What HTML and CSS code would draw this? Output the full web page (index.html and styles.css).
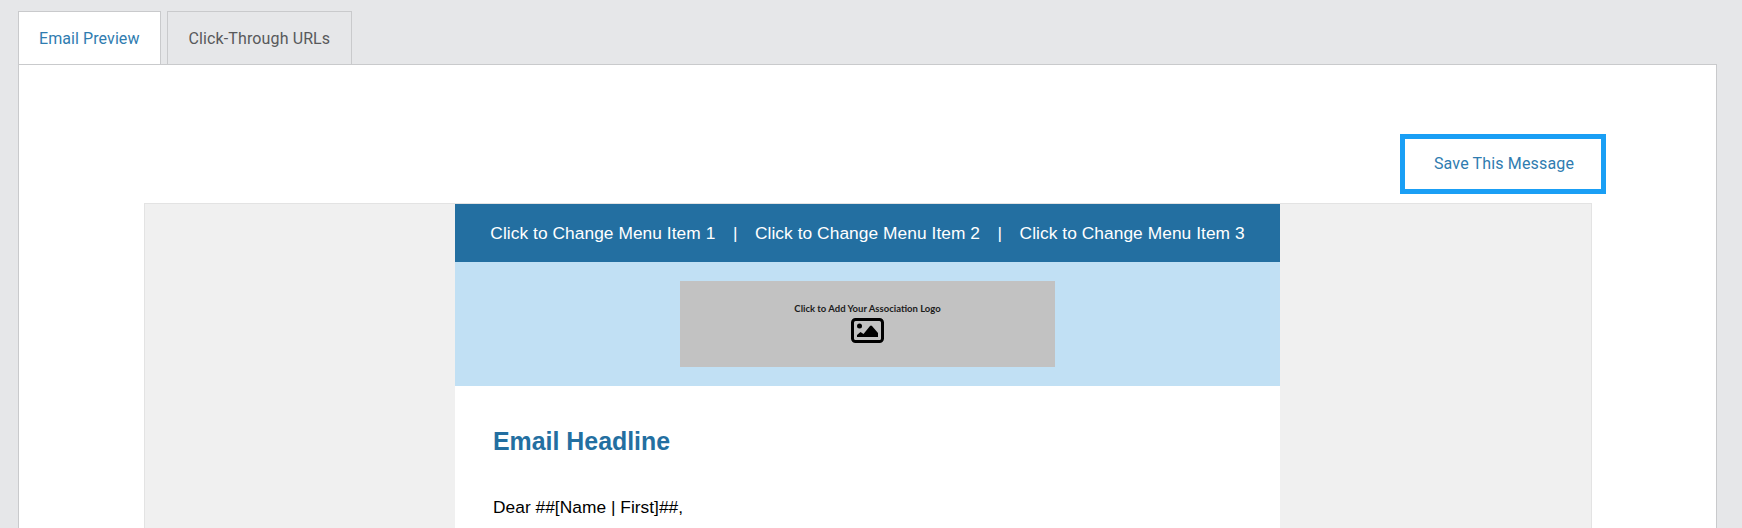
FILE: index.html
```html
<!DOCTYPE html>
<html>
<head>
    <title>Email Preview</title>
    <link rel="stylesheet" href="styles.css">
</head>
<body>
    <div class="tabs">
        <a class="tab active">Email Preview</a>
        <a class="tab">Click-Through URLs</a>
    </div>
    <div class="panel">
        <div class="actions">
            <a class="btn-save">Save This Message</a>
        </div>
        <div class="frame">
            <div class="email">
                <div class="menu">
                    <span>Click to Change Menu Item 1</span>
                    <span class="sep">|</span>
                    <span>Click to Change Menu Item 2</span>
                    <span class="sep">|</span>
                    <span>Click to Change Menu Item 3</span>
                </div>
                <div class="banner">
                    <div class="logo">
                        <p>Click to Add Your Association Logo</p>
                        <svg width="33" height="25" viewBox="0 0 33 25">
                            <rect x="1.500" y="1.500" width="30" height="22" rx="3" fill="none" stroke="#000" stroke-width="3"/>
                            <circle cx="8.500" cy="8" r="2.500" fill="#000"/>
                            <path d="M6 19 L6 17 L9.500 14 L12.500 16 L19 8 Q20 7 21 8 L27 15 L27 19 Z" fill="#000"/>
                        </svg>
                    </div>
                </div>
                <div class="content">
                    <h1>Email Headline</h1>
                    <p>Dear ##[Name | First]##,</p>
                </div>
            </div>
        </div>
    </div>
</body>
</html>
```

FILE: styles.css
```css
html, body {
    height: 528px;
    overflow: hidden;
}

body {
    box-sizing: border-box;
    margin: 0;
    padding: 11px 25px 0 18px;
    background: #e6e7e9;
    font-family: Roboto, sans-serif;
}

.tabs {
    display: flex;
    gap: 6px;
    height: 53px;
}

.tab {
    padding: 0 21px;
    border: 1px solid #c9cacc;
    border-bottom: 0;
    font-size: 16px;
    letter-spacing: .12px;
    line-height: 53px;
    color: #58595b;
}

.tab.active {
    padding: 0 20px;
    letter-spacing: .08px;
    background: #fff;
    color: #2f7cb0;
}

.panel {
    box-sizing: border-box;
    height: 464px;
    padding: 69px 124px 0 125px;
    background: #fff;
    border: 1px solid #c9cacc;
    border-bottom: 0;
}

.actions {
    display: flex;
    justify-content: flex-end;
    height: 69px;
}

.btn-save {
    box-sizing: border-box;
    width: 206px;
    height: 60px;
    margin-right: -14px;
    padding-left: 2px;
    border: 5px solid #1a9ff5;
    font-size: 16px;
    letter-spacing: .15px;
    line-height: 50px;
    text-align: center;
    color: #2f7cb0;
}

.frame {
    box-sizing: border-box;
    height: 325px;
    background: #f0f0f0;
    border: 1px solid #e3e3e3;
    border-bottom: 0;
}

.email {
    width: 825px;
    height: 324px;
    margin-left: 310px;
    background: #fff;
    font-family: "Liberation Sans", Arial, sans-serif;
}

.menu {
    display: flex;
    justify-content: center;
    gap: 17.5px;
    height: 58px;
    background: #236fa1;
    color: #fff;
    font-size: 17.33px;
    letter-spacing: .06px;
    line-height: 58px;
}

.banner {
    display: flex;
    justify-content: center;
    padding: 19px 0;
    background: #c1e0f4;
}

.logo {
    width: 375px;
    height: 86px;
    background: #c2c2c2;
    text-align: center;
}

.logo p {
    margin: 0;
    padding-top: 22px;
    font-family: Lato, sans-serif;
    font-size: 9.5px;
    font-weight: 700;
    line-height: 11px;
    color: #1c1c1c;
}

.logo svg {
    display: block;
    margin: 4px auto 0;
}

.content {
    padding: 39px 38px 0;
}

.content h1 {
    margin: 0 0 40px;
    font-size: 24.9px;
    line-height: 32px;
    color: #236fa1;
}

.content p {
    margin: 0;
    font-size: 17.33px;
    letter-spacing: .03px;
    color: #000;
}
```
